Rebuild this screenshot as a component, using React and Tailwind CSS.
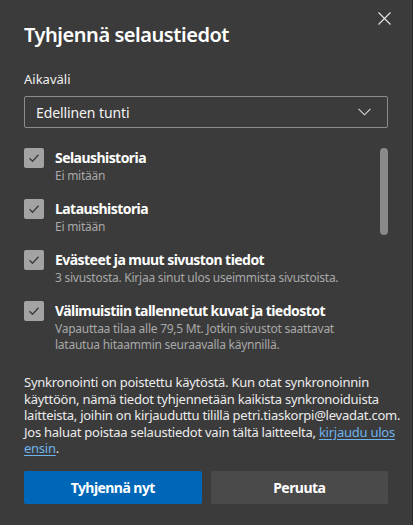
import { useState } from 'react';

const items = [
  { id: 'history', title: 'Selaushistoria', sub: ['Ei mitään'] },
  { id: 'downloads', title: 'Lataushistoria', sub: ['Ei mitään'] },
  { id: 'cookies', title: 'Evästeet ja muut sivuston tiedot', sub: ['3 sivustosta. Kirjaa sinut ulos useimmista sivustoista.'] },
  {
    id: 'cache',
    title: 'Välimuistiin tallennetut kuvat ja tiedostot',
    sub: ['Vapauttaa tilaa alle 79,5 Mt. Jotkin sivustot saattavat', 'latautua hitaammin seuraavalla käynnillä.'],
  },
];

function CheckBox({ checked, onClick }) {
  return (
    <button
      onClick={onClick}
      className="w-5 h-5 shrink-0 rounded-[2px] bg-[#a3a3a3] flex items-center justify-center"
    >
      {checked && (
        <svg width="12" height="12" viewBox="0 0 12 12" fill="none">
          <path d="M1.5 6.3 L4.5 9.2 L10.5 2.8" stroke="#3b3b3b" strokeWidth="1.3" />
        </svg>
      )}
    </button>
  );
}

export default function App() {
  const [checked, setChecked] = useState({ history: true, downloads: true, cookies: true, cache: true });

  return (
    <div className="w-[413px] h-[525px] bg-[#3b3b3b] border-r border-[#262626] relative font-['Noto_Sans','Open_Sans',sans-serif] text-white px-6">
      {/* Close */}
      <button className="absolute top-[12px] right-[21px] w-[13px] h-[13px]">
        <svg width="13" height="13" viewBox="0 0 13 13" fill="none">
          <path d="M0.5 0.5 L12.5 12.5 M12.5 0.5 L0.5 12.5" stroke="#e6e6e6" strokeWidth="1.1" />
        </svg>
      </button>

      {/* Title */}
      <h1 className="pt-[21px] text-[20px] leading-[28px] font-semibold tracking-[-0.45px]">Tyhjennä selaustiedot</h1>

      <p className="mt-[21px] text-[13px] leading-[18px] text-[#f0f0f0]">Aikaväli</p>

      {/* Dropdown */}
      <div className="mt-[8px] h-[32px] border border-[#8c8c8c] rounded-[2px] flex items-center justify-between pl-[11px] pr-[16px]">
        <span className="text-[14px] text-[#f2f2f2] tracking-[-0.1px]">Edellinen tunti</span>
        <svg width="13" height="8" viewBox="0 0 13 8" fill="none">
          <path d="M0.5 0.8 L6.5 6.8 L12.5 0.8" stroke="#d9d9d9" strokeWidth="1.1" />
        </svg>
      </div>

      {/* List */}
      <div className="mt-[20px] flex">
        <div className="flex-1 flex flex-col gap-[15px]">
          {items.map((it) => (
            <div key={it.id} className="flex gap-[11px]">
              <CheckBox
                checked={checked[it.id]}
                onClick={() => setChecked((c) => ({ ...c, [it.id]: !c[it.id] }))}
              />
              <div className="flex flex-col">
                <span className="text-[14px] leading-[20px] font-bold tracking-[-0.55px]">{it.title}</span>
                {it.sub.map((s) => (
                  <span key={s} className="text-[12px] leading-[16px] text-[#a8a8a8] whitespace-nowrap tracking-[-0.25px]">{s}</span>
                ))}
              </div>
            </div>
          ))}
        </div>
        <div className="w-[8px] h-[87px] rounded-full bg-[#8a8a8a]" />
      </div>

      {/* Sync note */}
      <p className="mt-[21px] text-[13px] leading-[16.5px] text-[#ececec] whitespace-nowrap tracking-[-0.25px]">
        Synkronointi on poistettu käytöstä. Kun otat synkronoinnin<br />
        käyttöön, nämä tiedot tyhjennetään kaikista synkronoiduista<br />
        laitteista, joihin on kirjauduttu tilillä petri.tiaskorpi@levadat.com.<br />
        Jos haluat poistaa selaustiedot vain tältä laitteelta,{' '}
        <a className="text-[#6fb3ec] underline underline-offset-2">kirjaudu ulos</a>
        <br />
        <a className="text-[#6fb3ec] underline underline-offset-2">ensin</a>.
      </p>

      {/* Buttons */}
      <div className="mt-[14px] grid grid-cols-2 gap-[9px]">
        <button className="h-[33px] rounded-[2px] bg-[#0067b8] text-[14px] font-bold tracking-[-0.55px]">Tyhjennä nyt</button>
        <button className="h-[33px] rounded-[2px] bg-[#4a4a4a] text-[14px] font-bold tracking-[-0.55px]">Peruuta</button>
      </div>
    </div>
  );
}
